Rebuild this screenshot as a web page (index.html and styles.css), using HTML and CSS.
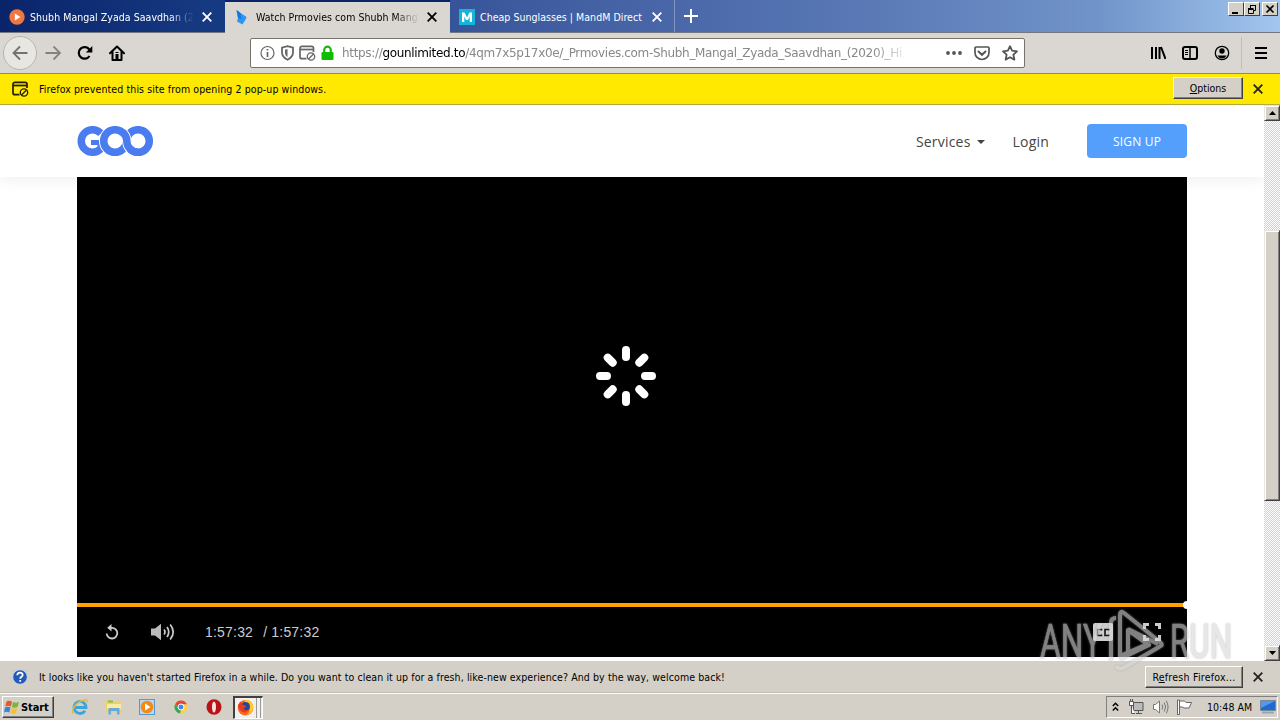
FILE: index.html
```html
<!DOCTYPE html>
<html lang="en">
<head>
  <meta charset="UTF-8">
  <meta name="viewport" content="width=device-width, initial-scale=1.0">
  <title>Watch Prmovies com Shubh Mangal Zyada Saavdhan</title>
  <link rel="stylesheet" href="styles.css">
</head>
<body>
  <div class="tabbar">
    <div class="tab tab-first">
      <svg class="favicon" width="16" height="16" viewBox="0 0 16 16"><circle cx="8" cy="8" r="7.7" fill="#f07840"/><path d="M5.8 4.6v6.8L11.5 8z" fill="#fff"/></svg>
      <span class="tab-title fade">Shubh Mangal Zyada Saavdhan (2</span>
      <svg class="tab-close" width="10" height="10" viewBox="0 0 10 10"><path d="M.7.7l8.6 8.6M9.3.7L.7 9.3"/></svg>
    </div>
    <div class="tab tab-active">
      <svg class="favicon" width="16" height="16" viewBox="0 0 16 16"><path d="M2.5 1l4 3 5.500 3.500L12.500 9 8.500 15.500 3 12.500 4 9z" fill="#2b95f5"/><path d="M2.5 1l4 3 1 6L4 9z" fill="#1478dc"/></svg>
      <span class="tab-title fade">Watch Prmovies com Shubh Manga</span>
      <svg class="tab-close" width="10" height="10" viewBox="0 0 10 10"><path d="M.7.7l8.6 8.6M9.3.7L.7 9.3"/></svg>
    </div>
    <div class="tab tab-last">
      <svg class="favicon" width="16" height="16" viewBox="0 0 16 16"><path d="M0 0h16v16H0z" fill="#14b4dc"/><path d="M3 13V3.500h2.500L8 8.500l2.500-5H13V13h-2.300V7.500L8.900 11H7.100L5.300 7.500V13z" fill="#fff"/></svg>
      <span class="tab-title">Cheap Sunglasses | MandM Direct</span>
      <svg class="tab-close" width="10" height="10" viewBox="0 0 10 10"><path d="M.7.7l8.6 8.6M9.3.7L.7 9.3"/></svg>
    </div>
    <svg class="new-tab" width="14" height="14" viewBox="0 0 14 14"><path d="M7 0v14M0 7h14" stroke="#fff" stroke-width="2"/></svg>
    <div class="window-buttons">
      <span class="win-btn"><svg width="12" height="11" viewBox="0 0 12 11"><path d="M2 9h6" stroke="#000" stroke-width="2"/></svg></span>
      <span class="win-btn"><svg width="12" height="11" viewBox="0 0 12 11" fill="none" stroke="#000"><path d="M4 1.500h6M4.500 1v3M9.500 1v5.500H8M2 4.500h5.500M2 5.500h5.500v4h-5v-4"/></svg></span>
      <span class="win-btn win-close"><svg width="12" height="11" viewBox="0 0 12 11"><path d="M2.500 1.500l7 7M9.500 1.500l-7 7" stroke="#000" stroke-width="1.700"/></svg></span>
    </div>
  </div>

  <div class="toolbar">
    <div class="nav">
      <span class="back"><svg width="16" height="16" viewBox="0 0 16 16"><path d="M15.500 8H1.500M8 1.500L1.500 8 8 14.500" fill="none" stroke="#74726e" stroke-width="1.800"/></svg></span>
      <svg class="forward" width="16" height="16" viewBox="0 0 16 16"><path d="M.5 8h14M8.500 1.500L15 8l-6.500 6.500" fill="none" stroke="#85827d" stroke-width="1.800"/></svg>
      <svg class="reload" width="16" height="16" viewBox="0 0 16 16"><path d="M12.500 11A5.800 5.800 0 1 1 12.300 4.500" fill="none" stroke="#000" stroke-width="2.200"/><path d="M15.300 1v6.500H8.800z" fill="#000"/></svg>
      <svg class="home" width="16" height="16" viewBox="0 0 16 16"><path d="M1 8.300L8 1.500l7 6.800M3.500 7v8h9V7" fill="none" stroke="#000" stroke-width="2" stroke-linejoin="round" stroke-linecap="round"/><path d="M6.500 9h3v6h-3zM6.500 7h3v1h-3z" fill="#000"/></svg>
    </div>
    <div class="urlbar">
      <div class="identity">
        <svg width="15" height="16" viewBox="0 0 15 16"><circle cx="7.500" cy="8" r="6.500" fill="none" stroke="#666" stroke-width="1.200"/><path d="M7.500 7v5M7.500 4v1.600" stroke="#666" stroke-width="1.700"/></svg>
        <svg width="13" height="16" viewBox="0 0 13 16"><path d="M6.500 1.200L12 2.700v4.800c0 3.800-3 6-5.500 7.300C4 13.500 1 11.300 1 7.500V2.700z" fill="none" stroke="#666" stroke-width="1.800"/><path d="M6.500 4L4 4.700v3c0 1.800 1 3.200 2.500 4.300z" fill="#666"/></svg>
        <svg width="17" height="16" viewBox="0 0 17 16" fill="none" stroke="#666"><path d="M7.500 13.700H3A2 2 0 0 1 1 11.700V3.300a2 2 0 0 1 2-2h9.500a2 2 0 0 1 2 2V7" stroke-width="1.700"/><path d="M1 4.500h13.500" stroke-width="1.700"/><circle cx="12" cy="11.500" r="3.700" stroke-width="1.300"/><path d="M9.500 14l5-5" stroke-width="1.300"/></svg>
        <svg width="13" height="16" viewBox="0 0 13 16"><path d="M3.200 8V5a3.300 3.300 0 0 1 6.600 0v3" fill="none" stroke="#12bc00" stroke-width="2.200"/><rect x=".5" y="7" width="12" height="8" rx="1.200" fill="#12bc00"/></svg>
      </div>
      <div class="url">https://<b>gounlimited.to</b>/4qm7x5p17x0e/_Prmovies.com-Shubh_Mangal_Zyada_Saavdhan_(2020)_Hi</div>
      <div class="page-actions">
        <svg width="16" height="16" viewBox="0 0 16 16" fill="#555"><circle cx="2" cy="8" r="1.900"/><circle cx="8" cy="8" r="1.900"/><circle cx="14" cy="8" r="1.900"/></svg>
        <svg width="16" height="16" viewBox="0 0 16 16" fill="none" stroke="#555" stroke-width="1.700"><path d="M2 2h12a1 1 0 0 1 1 1v4.500a7 7 0 0 1-14 0V3a1 1 0 0 1 1-1z"/><path d="M4.500 6.500L8 9.800l3.500-3.300" stroke-linecap="round" stroke-width="2"/></svg>
        <svg width="16" height="16" viewBox="0 0 16 16"><path d="M8 1.200l2.100 4.500 4.900.6-3.600 3.400 1 4.900L8 12.200l-4.400 2.400 1-4.900L1 6.300l4.900-.6z" fill="none" stroke="#555" stroke-width="1.800" stroke-linejoin="round"/></svg>
      </div>
    </div>
    <div class="tools">
      <svg width="16" height="16" viewBox="0 0 16 16" stroke="#000" stroke-width="2"><path d="M2 2v12M6 2v12M9.500 2v12M11 2l4.500 12" /></svg>
      <svg width="16" height="16" viewBox="0 0 16 16" fill="none" stroke="#000"><rect x="1" y="2" width="14" height="12" rx="2" stroke-width="2"/><path d="M8 2v12" stroke-width="1.500"/><path d="M3 5.500h3M3 7.500h3M3 9.500h3"/></svg>
      <svg width="16" height="16" viewBox="0 0 16 16"><circle cx="8" cy="8" r="6.700" fill="none" stroke="#000" stroke-width="1.300"/><circle cx="8" cy="6" r="2.700"/><path d="M3.500 10.500h9c-1 2-2.500 3-4.500 3s-3.500-1-4.500-3z"/></svg>
      <span class="separator"></span>
      <svg width="12" height="16" viewBox="0 0 12 16"><path d="M0 3h12M0 8h12M0 13h12" stroke="#000" stroke-width="2"/></svg>
    </div>
  </div>

  <div class="popup-bar">
    <svg width="17" height="16" viewBox="0 0 17 16" fill="none" stroke="#221f00"><path d="M7.500 13.700H3A2 2 0 0 1 1 11.700V3.300a2 2 0 0 1 2-2h10a2 2 0 0 1 2 2V7" stroke-width="1.700"/><path d="M1 4.500h14" stroke-width="1.700"/><circle cx="12" cy="11.500" r="3.700" stroke-width="1.300"/><path d="M9.500 14l5-5" stroke-width="1.300"/></svg>
    <span class="popup-text">Firefox prevented this site from opening 2 pop-up windows.</span>
    <button class="classic-btn options"><span><u>O</u>ptions</span></button>
    <svg class="bar-close" width="10" height="10" viewBox="0 0 10 10"><path d="M.7.7l8.600 8.600M9.300.7L.7 9.300"/></svg>
  </div>

  <div class="viewport">
    <div class="page">
      <header class="site-header">
        <svg class="logo" width="77" height="31" viewBox="0 0 77 31" fill="none">
          <path d="M24 7.500A11.300 11.300 0 1 0 24 22.500" stroke="#4a7cf0" stroke-width="7.500"/>
          <path d="M14 16.500H23v6" stroke="#4a7cf0" stroke-width="5"/>
          <circle cx="61" cy="15" r="11.300" stroke="#4a7cf0" stroke-width="7.500"/>
          <circle cx="38" cy="15" r="11.300" stroke="#fff" stroke-width="9.500"/>
          <circle cx="38" cy="15" r="11.300" stroke="#4a7cf0" stroke-width="7.500"/>
          <path d="M46.500 7Q49.800 11 49.800 15A11.300 11.300 0 0 0 53 23" stroke="#fff" stroke-width="9.300"/>
          <path d="M45.500 6Q49.800 10 49.800 15A11.300 11.300 0 0 0 61 26.300" stroke="#4a7cf0" stroke-width="7.500"/>
        </svg>
        <nav class="site-nav">
          <a class="services">Services</a>
          <span class="caret"></span>
          <a class="login">Login</a>
          <a class="signup">SIGN UP</a>
        </nav>
      </header>
      <div class="player">
        <div class="stage">
          <svg width="62" height="62" viewBox="-31 -31 62 62" stroke="#fff" stroke-width="8" stroke-linecap="round"><path d="M0-26v7M0 26v-7M-26 0h7M26 0h-7M-18.300-18.300l5 5M18.300-18.300l-5 5M-18.300 18.300l5-5M18.300 18.300l-5-5"/></svg>
        </div>
        <div class="progress"><span class="handle"></span></div>
        <div class="controls">
          <svg class="replay" width="14" height="16" viewBox="0 0 14 16"><path d="M1.700 9.500a5.300 5.300 0 1 0 5.300-5.600H5" fill="none" stroke="#ccc" stroke-width="1.800"/><path d="M6.500 0v7.500L2.200 3.800z" fill="#ccc"/></svg>
          <svg class="volume" width="24" height="18" viewBox="0 0 24 18"><path d="M0 5.500h4L10 .8v16.400l-6-4.700H0z" fill="#bbb"/><path d="M13 6.500q2 2.500 0 5M16 4q3.500 5 0 10M19.200 1.500q6 7.500 0 15" fill="none" stroke="#ccc" stroke-width="1.700"/></svg>
          <span class="time">1:57:32</span><span class="duration">/ 1:57:32</span>
          <span class="cc"><svg width="20" height="18" viewBox="0 0 20 18"><rect width="20" height="18" rx="2" fill="#ccc"/><path d="M8.500 7.500V6.500h-4v6h4v-1M16 7.500V6.500h-4v6h4v-1" fill="none" stroke="#111" stroke-width="1.600"/></svg></span>
          <svg class="fullscreen" width="18" height="18" viewBox="0 0 18 18"><path d="M6 1.500H1.500V6M12 1.500h4.500V6M6 16.500H1.500V12M12 16.500h4.500V12" fill="none" stroke="#ccc" stroke-width="3"/></svg>
        </div>
      </div>
    </div>
    <div class="scrollbar">
      <span class="arrow"><svg width="7" height="4"><path d="M3.500 0L7 4H0z"/></svg></span>
      <span class="thumb"></span>
      <span class="arrow arrow-down"><svg width="7" height="4"><path d="M0 0h7L3.500 4z"/></svg></span>
    </div>
  </div>

  <div class="refresh-bar">
    <svg width="16" height="16" viewBox="0 0 16 16"><circle cx="8" cy="8" r="7.300" fill="#2459b8" stroke="#c6d4ea"/><path d="M5.300 6.300C5.300 2.800 10.700 3 10.700 6c0 1.800-2.500 1.800-2.500 3.700M8.200 11v1.800" fill="none" stroke="#fff" stroke-width="1.800"/></svg>
    <span class="refresh-text">It looks like you haven't started Firefox in a while. Do you want to clean it up for a fresh, like-new experience? And by the way, welcome back!</span>
    <button class="classic-btn refresh"><span>R<u>e</u>fresh Firefox...</span></button>
    <svg class="bar-close" width="10" height="10" viewBox="0 0 10 10"><path d="M.7.7l8.600 8.600M9.300.7L.7 9.300"/></svg>
  </div>

  <div class="taskbar">
    <div class="start">
      <svg width="16" height="15" viewBox="0 0 16 15"><path d="M2.500 1.500q3-1.500 5.500.2L6.800 6.500q-2.500-1.500-5.500 0z" fill="#e8572a"/><path d="M9 2q3 1.500 6 0l-1.500 5q-3 1.500-5.700 0z" fill="#75b83b"/><path d="M1 7.500q3-1.500 5.500 0l-1.200 5q-3-1.500-5.300 0z" fill="#3a82d8"/><path d="M7.500 8q3 1.500 5.700 0L12 13q-3 1.500-5.700 0z" fill="#f7c02e"/></svg>
      <span>Start</span>
    </div>
    <div class="launch">
      <svg width="18" height="18" viewBox="0 0 18 18" fill="none"><path d="M4.300 9.500H15a6 6 0 1 0-1 3.300" stroke="#40a4dc" stroke-width="2.800"/><path d="M2.500 15.500C-1 13 5 4 13 2q4-1 3.300 2.500" stroke="#e8b93c" stroke-width="1.500"/></svg>
      <svg width="18" height="18" viewBox="0 0 18 18"><path d="M1 2h6l1 2h8v10H1z" fill="#f0cf67"/><path d="M3 2.500h5v2H3z" fill="#7bbf65"/><path d="M2 6h14v5H2z" fill="#fbeaa5"/><path d="M3.500 16.500V10h11v6.500H12V13H6v3.500z" fill="#66abd6"/></svg>
      <svg width="18" height="18" viewBox="0 0 18 18"><rect x="1.500" y="1.500" width="15" height="15" fill="#b9d8ef" stroke="#5699d1"/><circle cx="9" cy="9" r="6.300" fill="#f38a16"/><path d="M7 5.500v7L12.500 9z" fill="#fff"/></svg>
      <svg width="18" height="18" viewBox="0 0 18 18"><circle cx="9" cy="9" r="6.500" fill="#ffd23f"/><path d="M3.400 5.700A6.500 6.500 0 0 1 14.900 6.200H9L6.200 10.600z" fill="#e6453a"/><path d="M3.400 5.700l2.800 4.900 2.800 1.400-1 3.500A6.500 6.500 0 0 1 3.400 5.700z" fill="#36a852"/><circle cx="9" cy="9" r="3" fill="#4285f4" stroke="#fff"/></svg>
      <svg width="18" height="18" viewBox="0 0 18 18"><ellipse cx="9" cy="9" rx="7.500" ry="7.700" fill="#b91318"/><ellipse cx="9" cy="9" rx="2" ry="5.500" fill="#f3e4e1"/></svg>
    </div>
    <div class="running">
      <svg width="17" height="17" viewBox="0 0 17 17"><circle cx="8.500" cy="8.800" r="7.800" fill="#f36c21"/><path d="M8 1q8-1 8.300 8-1.300 6-7 7 4.700-3 3-8-2-2-4.300-3z" fill="#ffc928"/><circle cx="8.500" cy="7.500" r="4.500" fill="#24479b"/><path d="M1 6l3-3.500q0 3 3 3.500L9.500 7q-1.500 2-3 2.500 2 2.500 5 1-2 4-6 2.500Q1.500 11 1 6z" fill="#e63a22"/></svg>
      <span></span><span></span>
    </div>
    <div class="tray">
      <svg class="chevrons" width="7" height="10" viewBox="0 0 7 10"><path d="M.8 4L3.500 1.300 6.200 4M.8 8.500l2.700-2.700 2.700 2.700" fill="none" stroke="#000" stroke-width="1.500"/></svg>
      <svg class="network" width="17" height="16" viewBox="0 0 17 16" fill="none" stroke="#555"><path d="M5.500 3.500H15v8H5.500z" fill="#bbb"/><path d="M8 14.500h6M10.500 12v2"/><path d="M1.500 2.500h4v4h-4zM2.500 0v2M4.500 0v2M3.500 7v7.500H7" fill="#fff"/></svg>
      <svg class="sound" width="17" height="16" viewBox="0 0 17 16" fill="none" stroke="#777"><path d="M1.500 5.500h2L7.500 2v12l-4-3.500h-2z" fill="#fff"/><path d="M10 5.500q1.500 2.500 0 5M12.200 3.500q3 4.500 0 9M14.300 1.700q3.500 6.300 0 12.600"/></svg>
      <svg class="flag" width="17" height="16" viewBox="0 0 17 16" fill="#fff" stroke="#666"><path d="M1.500 1v14.500M3.500 2h5l1.500 1.500h5.500L13 9H8L6.500 8h-3zM1.500 1h2v14.500h-2z"/></svg>
      <span class="clock">10:48 AM</span>
      <svg class="desktop" width="16" height="14" viewBox="0 0 16 14"><path d="M.5.500h15v10H.5z" fill="#1f69d1" stroke="#789"/><path d="M1 1h14L1 8z" fill="#5597e8"/><path d="M2 12.500h12" stroke="#94a5b8" stroke-width="2"/></svg>
    </div>
  </div>

  <svg class="watermark" width="204" height="70" viewBox="0 0 204 70">
    <g class="mark-text">
      <text x="4" y="52" textLength="62" lengthAdjust="spacingAndGlyphs">ANY</text>
      <text x="134" y="52" textLength="62" lengthAdjust="spacingAndGlyphs">RUN</text>
    </g>
    <path class="mark-logo" d="M75 54V17q0-5 5-5M84 51V9q0-5 4-2l36 29q4 3-1 5L87 62q-4 2-7-2M84 50l30-13M92 46V24l21 15-29 14M92 23l30 15"/>
  </svg>
</body>
</html>
```
FILE: styles.css
```css
* {
  box-sizing: border-box;
}
body {
  margin: 0;
  width: 1280px;
  height: 720px;
  overflow: hidden;
  position: relative;
  display: flex;
  flex-direction: column;
  background: #d4d0c8;
  color: #000;
  font-family: "DejaVu Sans Condensed", "Noto Sans", sans-serif;
  font-size: 10.5px;
  white-space: nowrap;
}
svg {
  display: block;
  flex: none;
}

/* tabs */
.tabbar {
  height: 33px;
  flex: none;
  display: flex;
  background: linear-gradient(90deg, #0a246a 0, #173b83 225px, #3a579c 480px, #5877b4 850px, #7194ca 1100px, #a2c6ee 1280px);
  border-bottom: 1px solid #74777d;
}
.tab {
  width: 225px;
  display: flex;
  align-items: center;
  color: #fff;
  padding: 2px 13px 0 9px;
  border-right: 1px solid #8293bd;
}
.tab-active {
  height: 33px;
  padding: 0 13px 1px 9px;
  background: #dad7d2;
  border-top: 2px solid #0a246a;
  border-right: 0;
  color: #000;
}
.tab-first {
  border-right: 0;
}
.tab-last {
  padding-right: 12px;
}
.favicon {
  margin-right: 5px;
}
.tab-title {
  flex: 1;
  min-width: 0;
  letter-spacing: 0.04px;
}
.fade {
  -webkit-mask-image: linear-gradient(90deg, #000 85%, transparent);
  mask-image: linear-gradient(90deg, #000 85%, transparent);
}
.tab-active .favicon {
  margin-right: 6px;
}
.tab-close {
  margin-left: 8px;
  stroke: currentColor;
  stroke-width: 1.8;
}
.new-tab {
  margin: 9px 0 0 9px;
}
.window-buttons {
  margin-left: auto;
  display: flex;
  padding: 2px 2px 0 0;
}
.win-btn {
  width: 16px;
  height: 14px;
  padding: 1px;
  background: #d4d0c8;
  border: 1px solid;
  border-color: #fff #404040 #404040 #fff;
}
.win-close {
  margin-left: 2px;
}

/* toolbar */
.toolbar {
  height: 41px;
  flex: none;
  display: flex;
  align-items: center;
  background: #dad7d2;
  border-bottom: 1px solid #8c887c;
}
.nav {
  display: flex;
  align-items: center;
  width: 250px;
  padding-left: 3px;
}
.back {
  width: 34px;
  height: 34px;
  display: flex;
  align-items: center;
  justify-content: center;
  border-radius: 50%;
  background: #e8e6e3;
  border: 1px solid #b8b5b0;
}
.forward {
  margin-left: 8px;
}
.reload, .home {
  margin-left: 16px;
}
.urlbar {
  width: 775px;
  height: 30px;
  display: flex;
  align-items: center;
  background: #fff;
  border: 1px solid #77736b;
  border-radius: 2px;
}
.identity {
  display: flex;
  gap: 5px;
  padding-left: 9px;
}
.identity svg:nth-child(2) {
  margin: 0 0 0 1px;
}
.url {
  width: 570px;
  margin-left: 8px;
  color: #888;
  font-family: "DejaVu Sans", sans-serif;
  font-size: 12px;
  letter-spacing: -0.33px;
  -webkit-mask-image: linear-gradient(90deg, #000 93%, transparent);
  mask-image: linear-gradient(90deg, #000 93%, transparent);
}
.url b {
  color: #000;
  font-weight: normal;
}
.page-actions {
  display: flex;
  gap: 12px;
  margin-left: auto;
  padding-right: 6px;
}
.tools {
  display: flex;
  align-items: center;
  gap: 16px;
  margin-left: 125px;
}
.separator {
  width: 1px;
  height: 32px;
  margin: 0 -5px;
  background: #c0bdb7;
}
.tools .separator + svg {
  margin-left: 2px;
}

/* notification bars */
.popup-bar, .refresh-bar {
  height: 31px;
  flex: none;
  display: flex;
  align-items: center;
  padding: 0 17px 0 12px;
}
.popup-bar {
  background: #ffe900;
  border-bottom: 1px solid #b8ad38;
}
.popup-text {
  margin-left: 10px;
  letter-spacing: 0.11px;
}
.refresh-text {
  margin-left: 11px;
  letter-spacing: 0.09px;
}
.classic-btn {
  margin: 0 10px 0 auto;
  padding: 0;
  height: 22px;
  font: inherit;
  background: #d4d0c8;
  border: 1px solid;
  border-color: #fff #404040 #404040 #fff;
  box-shadow: inset -1px -1px #808080;
}
.options {
  width: 70px;
  margin-bottom: 2px;
}
.refresh {
  width: 98px;
  letter-spacing: 0.25px;
}
.bar-close {
  stroke: #222;
  stroke-width: 1.8;
}
.refresh-bar {
  height: 32px;
  border-bottom: 1px solid #c0bdb5;
}

/* page */
.viewport {
  height: 556px;
  flex: none;
  display: flex;
  background: #fff;
}
.page {
  width: 1264px;
}
.site-header {
  height: 72px;
  padding: 0 77px;
  display: flex;
  align-items: center;
  justify-content: space-between;
  box-shadow: 0 4px 14px rgba(0,0,0,0.06);
}
.site-nav {
  display: flex;
  align-items: center;
  color: #444;
  font-family: "Open Sans", sans-serif;
  font-size: 14px;
  letter-spacing: 0.2px;
}
.caret {
  margin: 1px 28px 0 6px;
  border: 4px solid transparent;
  border-top-color: #444;
  border-bottom: 0;
}
.signup {
  width: 100px;
  height: 34px;
  margin-left: 38px;
  line-height: 35px;
  text-align: center;
  font-size: 12px;
  color: #fff;
  background: #549ffc;
  border-radius: 4px;
}
.player {
  width: 1110px;
  height: 480px;
  margin-left: 77px;
  background: #000;
  position: relative;
}
.stage {
  height: 426px;
  padding: 168px 0 0 518px;
}
.progress {
  height: 4px;
  background: #ffa200;
  display: flex;
  justify-content: flex-end;
}
.handle {
  width: 4px;
  height: 8px;
  margin-top: -2px;
  background: #fff;
  border-radius: 4px 0 0 4px;
}
.controls {
  height: 50px;
  display: flex;
  align-items: center;
  padding: 0 26px 0 28px;
  color: #ccc;
  font-family: "Liberation Sans", sans-serif;
  font-size: 14px;
  letter-spacing: 0.2px;
}
.volume {
  margin-left: 32px;
}
.time {
  margin-left: 30px;
}
.duration {
  margin-left: 10px;
}
.cc {
  margin-left: auto;
}
.fullscreen {
  margin-left: 30px;
}
.scrollbar {
  width: 16px;
  display: flex;
  flex-direction: column;
  background: repeating-conic-gradient(#fff 0 25%, #d4d0c8 0 50%) 0 0 / 2px 2px;
}
.arrow {
  height: 16px;
  display: flex;
  align-items: center;
  justify-content: center;
}
.arrow, .thumb {
  background: #d4d0c8;
  border: 1px solid;
  border-color: #e8e5df #404040 #404040 #e8e5df;
  box-shadow: inset 1px 1px #fff, inset -1px -1px #808080;
}
.thumb {
  height: 271px;
  margin-top: 109px;
}
.arrow-down {
  margin-top: auto;
}

/* taskbar */
.taskbar {
  flex: 1;
  display: flex;
  align-items: center;
  border-top: 1px solid #fff;
  padding: 0 2px;
}
.start {
  width: 52px;
  height: 22px;
  display: flex;
  align-items: center;
  gap: 1px;
  padding-left: 1px;
  border: 1px solid;
  border-color: #fff #404040 #404040 #fff;
  box-shadow: inset -1px -1px #808080;
  font-weight: bold;
  font-size: 11px;
  letter-spacing: -0.1px;
}
.launch {
  display: flex;
  gap: 15.5px;
  margin-left: 17px;
}
.running {
  height: 23px;
  display: flex;
  align-items: center;
  gap: 2px;
  margin-left: 10px;
  padding-left: 2px;
  background: #f2f0ed;
  border: 1px solid #fff;
  border-top: 2px solid #404040;
  border-left: 2px solid #404040;
}
.running span {
  width: 2px;
  height: 100%;
  border-left: 1px solid #999;
}
.tray {
  width: 172px;
  height: 22px;
  display: flex;
  align-items: center;
  margin-left: auto;
  padding-left: 5px;
  border: 1px solid;
  border-color: #808080 #fff #fff #808080;
}
.network {
  margin-left: 9px;
}
.sound {
  margin-left: 7px;
}
.flag {
  margin-left: 7px;
}
.clock {
  margin-left: 14px;
  letter-spacing: 0.05px;
}
.desktop {
  margin-left: 8px;
}

/* watermark lies over the player and the bars */
.watermark {
  position: absolute;
  left: 1036px;
  top: 606px;
  opacity: 0.6;
  filter: drop-shadow(0 0 1px #999);
}
.mark-text {
  fill: #d8d8d8;
  stroke: #d8d8d8;
  stroke-width: 0.7;
  font-family: Roboto, sans-serif;
  font-size: 49px;
}
.mark-logo {
  fill: none;
  stroke: #d8d8d8;
  stroke-width: 4;
  stroke-linejoin: round;
}
```
